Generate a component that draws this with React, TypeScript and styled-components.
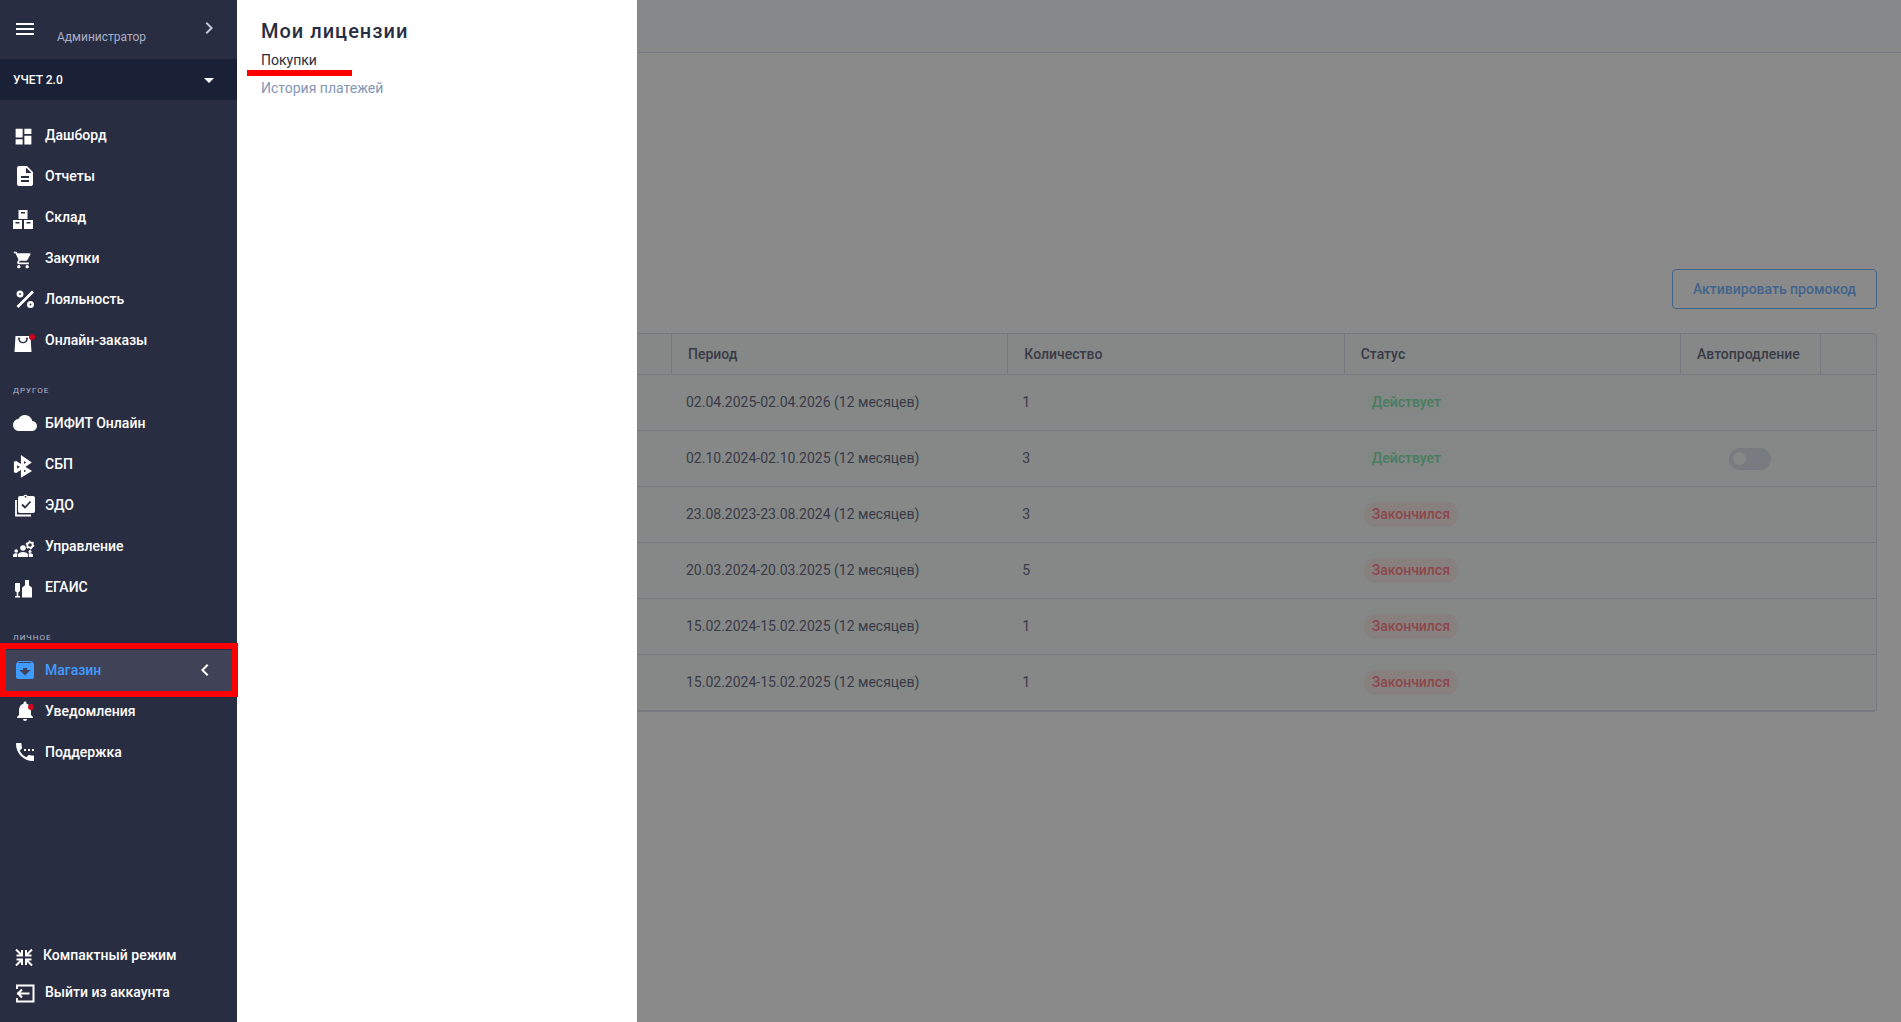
import React from "react";
import styled, { createGlobalStyle, css } from "styled-components";
import {
  MdMenu, MdChevronRight, MdChevronLeft, MdArrowDropDown, MdDashboard, MdDescription,
  MdShoppingCart, MdCloud, MdArchive, MdNotifications, MdSettingsPhone,
} from "react-icons/md";

const Global = createGlobalStyle`
  *, *::before, *::after { box-sizing: border-box; }
  body { margin: 0; font-family: Roboto, "Noto Sans", sans-serif; font-size: 14px; background: #8a8a8a; }
  button { font: inherit; border: 0; background: none; padding: 0; cursor: pointer; }
  a { text-decoration: none; color: inherit; }
`;

const Shell = styled.div`
  display: grid;
  grid-template-columns: 237px 400px minmax(0, 1fr);
  min-height: 100vh;
`;

const Sidebar = styled.aside`
  display: flex;
  flex-direction: column;
  background: #292d41;
  color: #fff;
  font-weight: 500;
`;

const TopBar = styled.div`
  display: flex;
  align-items: center;
  height: 59px;
  padding: 0 16px 2px 13px;
`;

const IconButton = styled.button`
  display: flex;
  color: #fff;
`;

const UserName = styled.span`
  flex: 1;
  padding: 16px 0 0 20px;
  font-size: 12px;
  font-weight: 400;
  line-height: 16px;
  color: #a9afc8;
`;

const Expand = styled(IconButton)`
  && { padding-bottom: 2px; }
  color: #c3c7d6;
`;

const Account = styled.button`
  display: flex;
  align-items: center;
  justify-content: space-between;
  height: 41px;
  && { padding: 0 16px 0 13px; background: #1a2035; font-size: 12px; font-weight: 500; }
  color: #fff;
`;

const Nav = styled.nav`
  display: flex;
  flex-direction: column;
  flex: 1;
  padding-top: 15px;
`;

const List = styled.ul`
  list-style: none;
  margin: 0;
  padding: 0;
`;

const GroupLabel = styled.h2`
  margin: 0;
  padding: 25px 13px 7px;
  font-size: 8px;
  line-height: 10px;
  font-weight: 400;
  letter-spacing: 1px;
  color: #b4b9cc;
`;

const Item = styled.li<{ $active?: boolean }>`
  position: relative;
  ${(p) => p.$active && css`
    background: #404357;
    color: #409bff;
    &::after {
      content: "";
      position: absolute;
      inset: -7px -1px -6px 0;
      border: 6px solid #f00;
      pointer-events: none;
      z-index: 1;
    }
  `}
`;

const ItemLink = styled.a<{ $compact?: boolean }>`
  display: flex;
  align-items: center;
  height: ${(p) => (p.$compact ? 37 : 41)}px;
  padding: 0 20px 2px 13px;
`;

const IconBox = styled.span<{ $low?: boolean; $narrow?: boolean }>`
  display: flex;
  width: ${(p) => (p.$narrow ? 30 : 32)}px;
  padding-top: ${(p) => (p.$low ? 4 : 0)}px;
  svg { display: block; overflow: visible; }
`;

const ItemText = styled.span`
  flex: 1;
`;

const Chevron = styled.span`
  display: flex;
  color: #fff;
`;

const Footer = styled(List)`
  padding-bottom: 11px;
`;

const Drawer = styled.section`
  background: #fff;
  padding: 17px 24px;
  color: #292d41;
`;

const DrawerTitle = styled.h1`
  margin: 0 0 1px;
  font-size: 20px;
  line-height: 28px;
  font-weight: 500;
  letter-spacing: 1px;
`;

const DrawerLink = styled.a<{ $current?: boolean }>`
  position: relative;
  display: block;
  line-height: 28px;
  color: ${(p) => (p.$current ? "#292d41" : "#8496b5")};
  ${(p) => p.$current && css`
    &::after {
      content: "";
      position: absolute;
      left: -14px;
      top: 24px;
      width: 105px;
      height: 6px;
      background: #f00;
    }
  `}
`;

const Main = styled.main`
  background: #8a8a8a;
  color: #393a47;
`;

const Header = styled.header`
  height: 53px;
  background: #86888a;
  border-bottom: 1px solid #777980;
`;

const Content = styled.div`
  display: flex;
  flex-direction: column;
  gap: 24px;
  padding: 216px 24px 24px 0;
`;

const PromoButton = styled.button`
  align-self: flex-end;
  height: 40px;
  && { padding: 0 20px; border: 1px solid #42648c; border-radius: 4px; font-weight: 500; }
  color: #42648c;
`;

const Table = styled.table`
  width: 100%;
  table-layout: fixed;
  border-collapse: separate;
  border-spacing: 0;
  background: #858886;
  border: solid #777980;
  border-width: 1px 1px 1px 0;
  border-radius: 0 4px 4px 0;
`;

const Col = styled.col<{ $width?: number }>`
  width: ${(p) => (p.$width ? `${p.$width}px` : "auto")};
`;

const Th = styled.th`
  height: 41px;
  padding: 0 16px;
  text-align: left;
  font-weight: 500;
  white-space: nowrap;
  border-bottom: 1px solid #777980;
  & + & { border-left: 1px solid #777980; }
`;

const Td = styled.td`
  height: 56px;
  padding: 0 16px;
  border-bottom: 1px solid #777980;
`;

const TextTd = styled(Td)`
  padding: 0 16px 2px 15px;
`;

const Badge = styled.span<{ $ended?: boolean }>`
  display: inline-block;
  margin-left: 4px;
  padding: 0 8px;
  border-radius: 12px;
  line-height: 25px;
  font-weight: 500;
  color: ${(p) => (p.$ended ? "#8c474a" : "#487d60")};
  background: ${(p) => (p.$ended ? "#88807f" : "#838785")};
`;

const Switch = styled.input`
  appearance: none;
  display: block;
  width: 42px;
  height: 22px;
  margin: 0 auto;
  padding: 4px;
  border-radius: 11px;
  background: #787b80;
  &::before {
    content: "";
    display: block;
    width: 13px;
    height: 13px;
    border-radius: 50%;
    background: #858886;
  }
  &:checked::before { margin-left: auto; }
`;

const Svg = ({ children, size = 20 }: { children: React.ReactNode; size?: number }) => (
  <svg width={size} height={size} viewBox="0 0 20 20" fill="currentColor" aria-hidden="true">{children}</svg>
);

const Boxes = () => (
  <Svg><path fillRule="evenodd" d="M5.500 1h9v9h-9zM8 3v1.400h4V3zM0 11h9v9H0zm2.500 2v1.400h4V13zM11 11h9v9h-9zm2.500 2v1.400h4V13z" /></Svg>
);
const Percent = () => (
  <Svg><g fill="none" stroke="currentColor" strokeWidth="2.600"><path d="M4.500 18 20 2.500" /><circle cx="7" cy="5" r="2.200" /><circle cx="17.500" cy="15.500" r="2.200" /></g></Svg>
);
const Bag = () => (
  <Svg><path d="M2.500 4h15L18.500 20h-17z" /><path d="M6 6.500c0 5.500 8 5.500 8 0" fill="none" stroke="#292d41" strokeWidth="1.300" /><circle cx="6" cy="6.500" r="1" fill="#292d41" /><circle cx="14" cy="6.500" r="1" fill="#292d41" /><circle cx="19" cy="5" r="3" fill="#d0021b" /></Svg>
);
const Sbp = () => (
  <Svg><path d="M2.500 5.500v11M2 6l14 9-6.500 4V2l6.500 4.500L2 16" fill="none" stroke="currentColor" strokeWidth="3.200" /></Svg>
);
const Clipboard = () => (
  <Svg><path fillRule="evenodd" d="M8 1h2.500a2.200 2.200 0 0 1 4 0H20a2 2 0 0 1 2 2v13a2 2 0 0 1-2 2H7a2 2 0 0 1-2-2V3a2 2 0 0 1 2-2zm4.500 0a.8.8 0 1 0 .1 0z" /><path d="m9 9.500 3 3 5.500-6" fill="none" stroke="#292d41" strokeWidth="1.800" /><path d="M3 5v15.500h15" fill="none" stroke="currentColor" strokeWidth="1.800" /></Svg>
);
const Team = () => (
  <Svg><circle cx="10" cy="10" r="2.800" /><path d="M5 19v-2c0-4 10-4 10 0v2z" /><circle cx="3.200" cy="13" r="1.800" /><path d="M0 19v-1.500C0 15.500 2 15 4.500 15.500L4 19zM20 19v-1.500c0-2-2-2.500-4.500-2L16 19z" /><circle cx="17" cy="13.500" r="1.500" /><circle cx="17" cy="7" r="2.700" fill="none" stroke="currentColor" strokeWidth="1.800" /><circle cx="17" cy="7" r="3.800" fill="none" stroke="currentColor" strokeWidth="1.200" strokeDasharray="1.800 2.200" /></Svg>
);
const Bottles = () => (
  <Svg><path d="M2 4h5v7c0 1.500-.8 2-1.700 2.300V17H7v1.500H2V17h1.700v-3.700C2.800 13 2 12.500 2 11zM12 1h4v5c0 1 3 1.500 3 3.500v9H9v-9C9 7.500 12 7 12 6z" /></Svg>
);
const Bell = () => (
  <svg width="24" height="24" viewBox="0 0 24 24"><MdNotifications size={24} /><circle cx="18" cy="8" r="3" fill="#d0021b" /></svg>
);
const Compress = () => (
  <Svg><path d="M3 2.500l5.500 5.500M9 3v5.500H3.500M19 2.500l-5.500 5.500M13 3v5.500h5.500M3 18.500l5.500-5.500M9 18v-5.500H3.500M19 18.500l-5.500-5.500M13 18v-5.500h5.500" fill="none" stroke="currentColor" strokeWidth="2" /></Svg>
);
const Exit = () => (
  <Svg><path d="M4 7V3.500h16.500v16H4V16M4 11.500h12.500M9 7.500l-4 4 4 4" fill="none" stroke="currentColor" strokeWidth="2" /></Svg>
);

type Entry = { label: string; icon: React.ReactNode; active?: boolean; low?: boolean };
const groups: { title?: string; items: Entry[] }[] = [
  { items: [
    { label: "Дашборд", icon: <MdDashboard size={21} />, low: true },
    { label: "Отчеты", icon: <MdDescription size={24} /> },
    { label: "Склад", icon: <Boxes />, low: true },
    { label: "Закупки", icon: <MdShoppingCart size={20} />, low: true },
    { label: "Лояльность", icon: <Percent /> },
    { label: "Онлайн-заказы", icon: <Bag />, low: true },
  ] },
  { title: "ДРУГОЕ", items: [
    { label: "БИФИТ Онлайн", icon: <MdCloud size={24} /> },
    { label: "СБП", icon: <Sbp />, low: true },
    { label: "ЭДО", icon: <Clipboard /> },
    { label: "Управление", icon: <Team />, low: true },
    { label: "ЕГАИС", icon: <Bottles />, low: true },
  ] },
  { title: "ЛИЧНОЕ", items: [
    { label: "Магазин", icon: <MdArchive size={24} />, active: true },
    { label: "Уведомления", icon: <Bell /> },
    { label: "Поддержка", icon: <MdSettingsPhone size={24} /> },
  ] },
];

const rows = [
  { period: "02.04.2025-02.04.2026 (12 месяцев)", count: 1, ended: false },
  { period: "02.10.2024-02.10.2025 (12 месяцев)", count: 3, ended: false, renew: true },
  { period: "23.08.2023-23.08.2024 (12 месяцев)", count: 3, ended: true },
  { period: "20.03.2024-20.03.2025 (12 месяцев)", count: 5, ended: true },
  { period: "15.02.2024-15.02.2025 (12 месяцев)", count: 1, ended: true },
  { period: "15.02.2024-15.02.2025 (12 месяцев)", count: 1, ended: true },
];

export default function App() {
  return (
    <>
      <Global />
      <Shell>
        <Sidebar>
          <TopBar>
            <IconButton aria-label="Меню"><MdMenu size={24} /></IconButton>
            <UserName>Администратор</UserName>
            <Expand aria-label="Профиль"><MdChevronRight size={24} /></Expand>
          </TopBar>
          <Account>УЧЕТ 2.0<MdArrowDropDown size={24} /></Account>
          <Nav>
            {groups.map((g, i) => (
              <React.Fragment key={i}>
                {g.title && <GroupLabel>{g.title}</GroupLabel>}
                <List>
                  {g.items.map((it) => (
                    <Item key={it.label} $active={it.active}>
                      <ItemLink href="#">
                        <IconBox $low={it.low}>{it.icon}</IconBox>
                        <ItemText>{it.label}</ItemText>
                        {it.active && <Chevron><MdChevronLeft size={24} /></Chevron>}
                      </ItemLink>
                    </Item>
                  ))}
                </List>
              </React.Fragment>
            ))}
          </Nav>
          <Footer>
            <Item><ItemLink href="#" $compact><IconBox $low $narrow><Compress /></IconBox><ItemText>Компактный режим</ItemText></ItemLink></Item>
            <Item><ItemLink href="#" $compact><IconBox><Exit /></IconBox><ItemText>Выйти из аккаунта</ItemText></ItemLink></Item>
          </Footer>
        </Sidebar>
        <Drawer>
          <DrawerTitle>Мои лицензии</DrawerTitle>
          <DrawerLink href="#" $current>Покупки</DrawerLink>
          <DrawerLink href="#">История платежей</DrawerLink>
        </Drawer>
        <Main>
          <Header />
          <Content>
            <PromoButton>Активировать промокод</PromoButton>
            <Table>
              <colgroup><Col $width={34} /><Col /><Col /><Col /><Col $width={140} /><Col $width={56} /></colgroup>
              <thead>
                <tr><Th /><Th>Период</Th><Th>Количество</Th><Th>Статус</Th><Th>Автопродление</Th><Th /></tr>
              </thead>
              <tbody>
                {rows.map((r, i) => (
                  <tr key={i}>
                    <Td /><TextTd>{r.period}</TextTd><TextTd>{r.count}</TextTd>
                    <Td><Badge $ended={r.ended}>{r.ended ? "Закончился" : "Действует"}</Badge></Td>
                    <Td>{r.renew && <Switch type="checkbox" aria-label="Автопродление" />}</Td>
                    <Td />
                  </tr>
                ))}
              </tbody>
            </Table>
          </Content>
        </Main>
      </Shell>
    </>
  );
}
